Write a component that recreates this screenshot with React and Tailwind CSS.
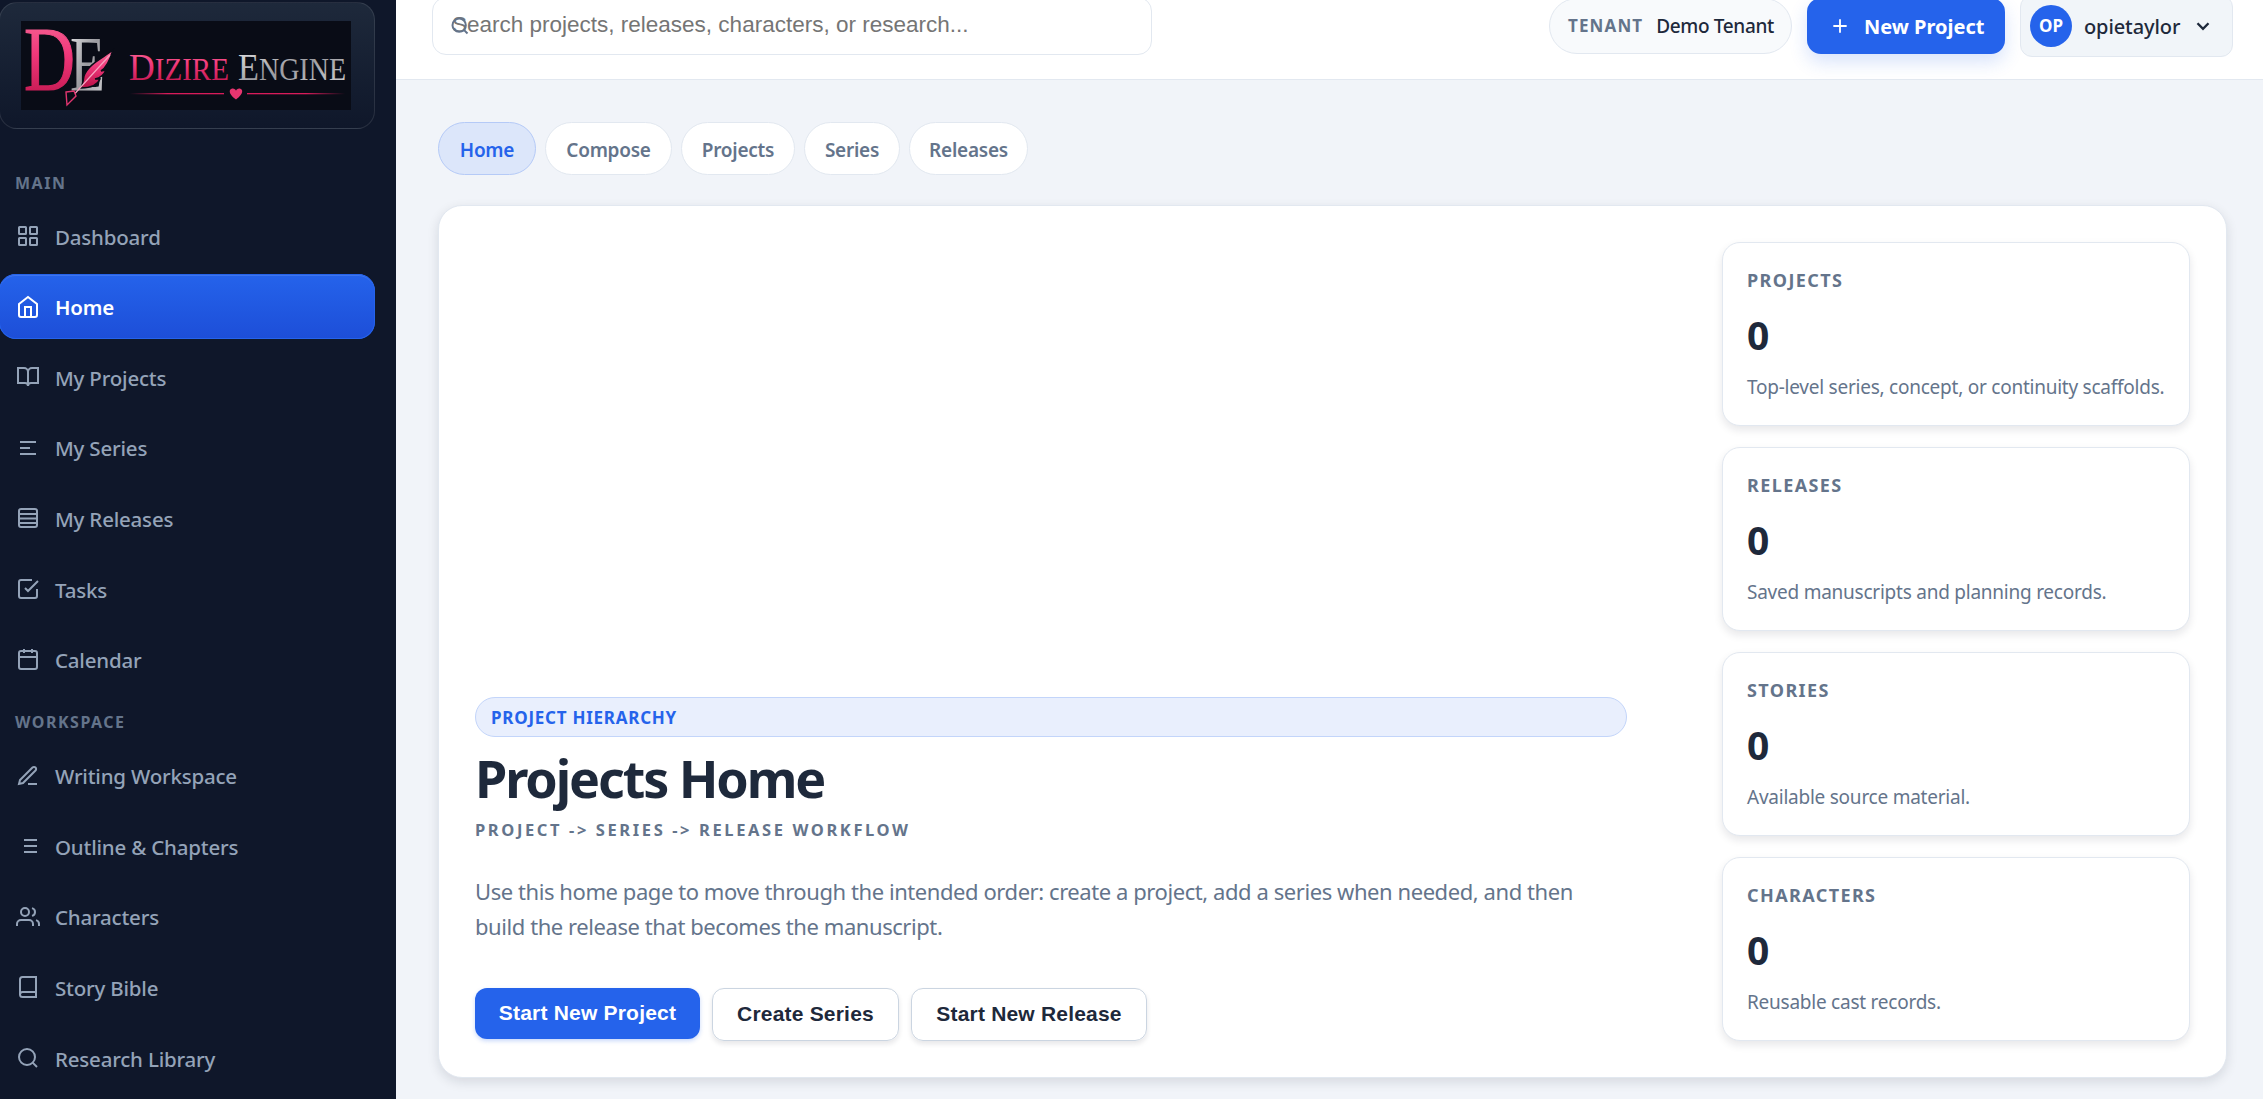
const mainNav = [
    { label: "Dashboard", icon: "grid" },
    { label: "Home", icon: "home", active: true },
    { label: "My Projects", icon: "bookOpen" },
    { label: "My Series", icon: "series" },
    { label: "My Releases", icon: "releases" },
    { label: "Tasks", icon: "tasks" },
    { label: "Calendar", icon: "calendar" },
];

const workspaceNav = [
    { label: "Writing Workspace", icon: "pen" },
    { label: "Outline & Chapters", icon: "list" },
    { label: "Characters", icon: "users" },
    { label: "Story Bible", icon: "book" },
    { label: "Research Library", icon: "search" },
];

const tabs = [
    { label: "Home", width: "w-[98px]", active: true },
    { label: "Compose", width: "w-[127px]" },
    { label: "Projects", width: "w-[114px]" },
    { label: "Series", width: "w-[96px]" },
    { label: "Releases", width: "w-[119px]" },
];

const stats = [
    { label: "Projects", value: 0, text: "Top-level series, concept, or continuity scaffolds." },
    { label: "Releases", value: 0, text: "Saved manuscripts and planning records." },
    { label: "Stories", value: 0, text: "Available source material." },
    { label: "Characters", value: 0, text: "Reusable cast records." },
];

const icons = {
    grid: (
        <>
            <rect x="3" y="3" width="7" height="7" rx="0.5" />
            <rect x="14" y="3" width="7" height="7" rx="0.5" />
            <rect x="3" y="14" width="7" height="7" rx="0.5" />
            <rect x="14" y="14" width="7" height="7" rx="0.5" />
        </>
    ),
    home: (
        <>
            <path d="M3 9l9-7 9 7v11a2 2 0 0 1-2 2H5a2 2 0 0 1-2-2z" />
            <path d="M9 22V12h6v10" />
        </>
    ),
    bookOpen: (
        <>
            <path d="M2 3h6a4 4 0 0 1 4 4v14a3 3 0 0 0-3-3H2z" />
            <path d="M22 3h-6a4 4 0 0 0-4 4v14a3 3 0 0 1 3-3h7z" />
        </>
    ),
    series: <path d="M4 6h16M4 12h10M4 18h16" />,
    releases: (
        <>
            <rect x="3" y="3" width="18" height="18" rx="2" />
            <path d="M3 8h18M3 12.5h18M3 17h18" />
        </>
    ),
    tasks: (
        <>
            <path d="M9 11l3 3L22 4" />
            <path d="M21 12v7a2 2 0 0 1-2 2H5a2 2 0 0 1-2-2V5a2 2 0 0 1 2-2h11" />
        </>
    ),
    calendar: (
        <>
            <rect x="3" y="3" width="18" height="18" rx="2" />
            <path d="M16 1v4M8 1v4M3 9h18" />
        </>
    ),
    pen: (
        <>
            <path d="M12 20h9" />
            <path d="M16.5 3.5a2.121 2.121 0 0 1 3 3L7 19l-4 1 1-4L16.5 3.5z" />
        </>
    ),
    list: <path d="M8 6h13M8 12h13M8 18h13" />,
    users: (
        <>
            <path d="M17 21v-2a4 4 0 0 0-4-4H5a4 4 0 0 0-4 4v2" />
            <circle cx="9" cy="7" r="4" />
            <path d="M23 21v-2a4 4 0 0 0-3-3.87M16 3.13a4 4 0 0 1 0 7.75" />
        </>
    ),
    book: (
        <>
            <path d="M4 19.5A2.5 2.5 0 0 1 6.5 17H20" />
            <path d="M6.5 2H20v20H6.5A2.5 2.5 0 0 1 4 19.5v-15A2.5 2.5 0 0 1 6.5 2z" />
        </>
    ),
    search: (
        <>
            <circle cx="11" cy="11" r="8" />
            <path d="M21 21l-4.35-4.35" />
        </>
    ),
    plus: <path d="M12 4v16M4 12h16" />,
    chevron: <path d="M6 9l6 6 6-6" />,
};

function Icon({ name, className = "size-6", strokeWidth = 2 }) {
    return (
        <svg viewBox="0 0 24 24" fill="none" stroke="currentColor" strokeWidth={strokeWidth} className={`shrink-0 ${className}`}>
            {icons[name]}
        </svg>
    );
}

function Logo() {
    return (
        <svg viewBox="0 0 330 89" className="h-[89px] w-[330px] bg-[#090c16]" fontFamily="'Liberation Serif', serif">
            <defs>
                <linearGradient id="pink" x1="0" y1="0" x2="0" y2="1">
                    <stop offset="0" stopColor="#f9709c" />
                    <stop offset="0.45" stopColor="#f0387a" />
                    <stop offset="1" stopColor="#b80f45" />
                </linearGradient>
                <linearGradient id="silver" x1="0" y1="0" x2="1" y2="1">
                    <stop offset="0" stopColor="#e8e8ea" />
                    <stop offset="0.5" stopColor="#9b9ba0" />
                    <stop offset="1" stopColor="#d4d4d7" />
                </linearGradient>
                <linearGradient id="lineLeft">
                    <stop offset="0" stopColor="#d81b5a" stopOpacity="0" />
                    <stop offset="0.4" stopColor="#d81b5a" />
                </linearGradient>
                <linearGradient id="lineRight">
                    <stop offset="0.6" stopColor="#d81b5a" />
                    <stop offset="1" stopColor="#d81b5a" stopOpacity="0" />
                </linearGradient>
            </defs>
            <text x="49" y="69" fontSize="79" textLength="35" lengthAdjust="spacingAndGlyphs" fill="url(#silver)">E</text>
            <text x="3" y="69" fontSize="92" textLength="51" lengthAdjust="spacingAndGlyphs" fill="url(#pink)" stroke="url(#pink)" strokeWidth="1.2">D</text>
            <path d="M92 29C82 37 67 43 63 55c-1 5-1 8-3 12 8 0 16-2 19-9l-5 0c5-1 9-4 11-9l-5 1c5-3 9-11 12-21z" fill="url(#pink)" stroke="#090c16" strokeWidth="1.5" />
            <path d="M89 34C78 46 66 59 50 77" fill="none" stroke="#f7a3bf" strokeWidth="1.2" />
            <path d="M45 71l8-1 2 5-9 9z" fill="#090c16" stroke="#e0356f" strokeWidth="1.4" />
            <text x="108" y="59" fontSize="38" textLength="100" lengthAdjust="spacingAndGlyphs" fill="url(#pink)">
                D<tspan fontSize="31">IZIRE</tspan>
            </text>
            <text x="217" y="59" fontSize="38" textLength="108" lengthAdjust="spacingAndGlyphs" fill="url(#silver)">
                E<tspan fontSize="31">NGINE</tspan>
            </text>
            <rect x="109" y="72" width="94" height="1.3" fill="url(#lineLeft)" />
            <rect x="226" y="72" width="98" height="1.3" fill="url(#lineRight)" />
            <path d="M215 78.5c-9-6.500-6.500-11-3.200-11 1.700 0 2.700 1 3.200 2.200.5-1.200 1.500-2.200 3.200-2.200 3.300 0 5.800 4.500-3.200 11z" fill="#e8356f" />
        </svg>
    );
}

function NavItem({ label, icon, active }) {
    return (
        <a
            className={`flex h-[65px] items-center gap-[15px] rounded-[17px] pl-[17px] text-[20.5px] tracking-[-0.2px] ${
                active
                    ? "bg-linear-to-b from-[#2563eb] to-[#1d4ed8] font-semibold text-white shadow-[inset_0_0_0_1px_#2563eb,inset_0_2px_0_rgba(255,255,255,0.12)]"
                    : "font-medium text-[#94a3b8]"
            }`}
        >
            <Icon name={icon} />
            <span className="pt-[2px]">{label}</span>
        </a>
    );
}

function NavSection({ title, items, className }) {
    return (
        <section className={className}>
            <h2 className="pl-[16px] text-[16px] leading-6 font-bold tracking-[1.5px] text-[#64748b] uppercase">{title}</h2>
            <nav className="flex flex-col gap-[5.6px]">
                {items.map((item) => (
                    <NavItem key={item.label} {...item} />
                ))}
            </nav>
        </section>
    );
}

function Sidebar() {
    return (
        <aside className="h-full w-[396px] shrink-0 overflow-hidden bg-[#0f172a]">
            <div className="-ml-px w-[376px] pt-[2px]">
                <div className="flex h-[127px] items-center rounded-[18px] border border-white/10 bg-linear-to-b from-[#1e293b] to-[#0f172a] pl-[21px]">
                    <Logo />
                </div>
                <NavSection title="Main" items={mainNav} className="mt-[42px] [&>nav]:mt-[8.5px]" />
                <NavSection title="Workspace" items={workspaceNav} className="mt-[18px] [&>nav]:mt-[9px]" />
            </div>
        </aside>
    );
}

function Header() {
    return (
        <header className="-mt-[27px] flex h-[107px] shrink-0 items-center justify-between border-b border-[#e2e8f0] bg-white pr-[30px] pl-[36px]">
            <div className="relative flex h-[58px] w-[720px] items-center rounded-[14px] border border-[#e2e8f0] pl-[19px]">
                <Icon name="search" className="absolute left-[17px] size-5 text-[#64748b]" strokeWidth={2.4} />
                <span className="pb-[2px] font-['Liberation_Sans',sans-serif] text-[22.5px] text-[#757575]">
                    Search projects, releases, characters, or research...
                </span>
            </div>
            <div className="flex items-center gap-[15px]">
                <div className="flex h-[56px] w-[243px] items-center justify-center gap-[13px] rounded-full border border-[#e2e8f0] bg-[#f8fafc] pl-px">
                    <span className="text-[17px] font-bold tracking-[1.1px] text-[#64748b]">TENANT</span>
                    <span className="text-[19px] font-medium tracking-[-0.35px] text-[#1e293b]">Demo Tenant</span>
                </div>
                <button className="flex h-[56px] w-[198px] items-center gap-[14px] rounded-[14px] bg-[#2563eb] pl-[23px] text-[20px] font-bold text-white shadow-[0_8px_18px_rgba(37,99,235,0.18)]">
                    <Icon name="plus" className="size-5" strokeWidth={2.2} />
                    <span className="pt-px">New Project</span>
                </button>
                <div className="flex h-[62px] w-[213px] items-center rounded-[12px] border border-[#e2e8f0] bg-[#f1f5f9] pl-[9px]">
                    <span className="flex size-[42px] items-center justify-center rounded-full bg-[#2563eb] text-[17px] font-bold text-white">OP</span>
                    <span className="ml-[12px] pt-[2px] text-[20px] font-medium tracking-[-0.1px] text-[#1e293b]">opietaylor</span>
                    <Icon name="chevron" className="ml-[12px] size-[22px] text-[#1e293b]" strokeWidth={2.6} />
                </div>
            </div>
        </header>
    );
}

function StatCard({ label, value, text }) {
    return (
        <div className="h-[184px] rounded-[18px] border border-[#e2e8f0] bg-white px-6 pt-6 shadow-[0_4px_8px_rgba(15,23,42,0.1)]">
            <p className="text-[18px] leading-[26px] font-bold tracking-[1.4px] text-[#64748b] uppercase">{label}</p>
            <p className="mt-5 text-[39px] leading-[44px] font-bold text-[#1e293b]">{value}</p>
            <p className="mt-4 text-[19px] leading-7 tracking-[-0.24px] whitespace-nowrap text-[#64748b]">{text}</p>
        </div>
    );
}

function Hero() {
    return (
        <section className="mt-[30px] flex h-[873px] justify-between rounded-[24px] border border-[#e2e8f0] bg-white p-9 shadow-[0_4px_12px_rgba(15,23,42,0.12)]">
            <div className="flex w-[1152px] flex-col justify-end pb-px">
                <div className="flex h-10 items-center rounded-full border border-[#c3d5fa] bg-[#e9effd] pt-px pl-[15px] text-[17px] font-bold tracking-[0.75px] text-[#2563eb]">
                    PROJECT HIERARCHY
                </div>
                <h1 className="mt-[11px] text-[52px] leading-[60px] font-bold tracking-[-2.1px] text-[#1e293b]">Projects Home</h1>
                <p className="mt-[10px] text-[16.5px] leading-6 font-bold tracking-[2.6px] text-[#64748b]">
                    PROJECT -&gt; SERIES -&gt; RELEASE WORKFLOW
                </p>
                <p className="mt-[32px] text-[22px] leading-[35px] tracking-[-0.43px] text-[#64748b]">
                    Use this home page to move through the intended order: create a project, add a series when needed, and then
                    <br />
                    build the release that becomes the manuscript.
                </p>
                <div className="mt-[44px] flex h-[52px] items-start gap-3 font-['Liberation_Sans',sans-serif] text-[21px] font-bold tracking-[0.2px]">
                    <button className="h-[51px] w-[225px] rounded-[12px] bg-[#2563eb] pb-[2px] text-white shadow-[0_2px_4px_rgba(37,99,235,0.25)]">
                        Start New Project
                    </button>
                    <button className="h-[53px] w-[187px] rounded-[12px] border border-[#cbd5e1] pb-[2px] text-[#1e293b] shadow-[0_3px_5px_rgba(15,23,42,0.1)]">
                        Create Series
                    </button>
                    <button className="h-[53px] w-[236px] rounded-[12px] border border-[#cbd5e1] pb-[2px] text-[#1e293b] shadow-[0_3px_5px_rgba(15,23,42,0.1)]">
                        Start New Release
                    </button>
                </div>
            </div>
            <div className="flex w-[468px] flex-col gap-[21px]">
                {stats.map((stat) => (
                    <StatCard key={stat.label} {...stat} />
                ))}
            </div>
        </section>
    );
}

export default function App() {
    return (
        <div className="flex h-[1099px] overflow-hidden bg-[#f1f4f9] font-['Noto_Sans',sans-serif]">
            <Sidebar />
            <div className="flex min-w-0 flex-1 flex-col">
                <Header />
                <main className="pt-[42px] pr-[36px] pl-[42px]">
                    <div className="flex gap-[9px]">
                        {tabs.map(({ label, width, active }) => (
                            <a
                                key={label}
                                className={`flex h-[53px] items-center justify-center rounded-full border pt-[3px] text-[19px] font-semibold tracking-[-0.25px] ${width} ${
                                    active ? "border-[#b5caf7] bg-[#dce6fa] text-[#2563eb]" : "border-[#e2e8f0] bg-white text-[#64748b]"
                                }`}
                            >
                                {label}
                            </a>
                        ))}
                    </div>
                    <Hero />
                </main>
            </div>
        </div>
    );
}
